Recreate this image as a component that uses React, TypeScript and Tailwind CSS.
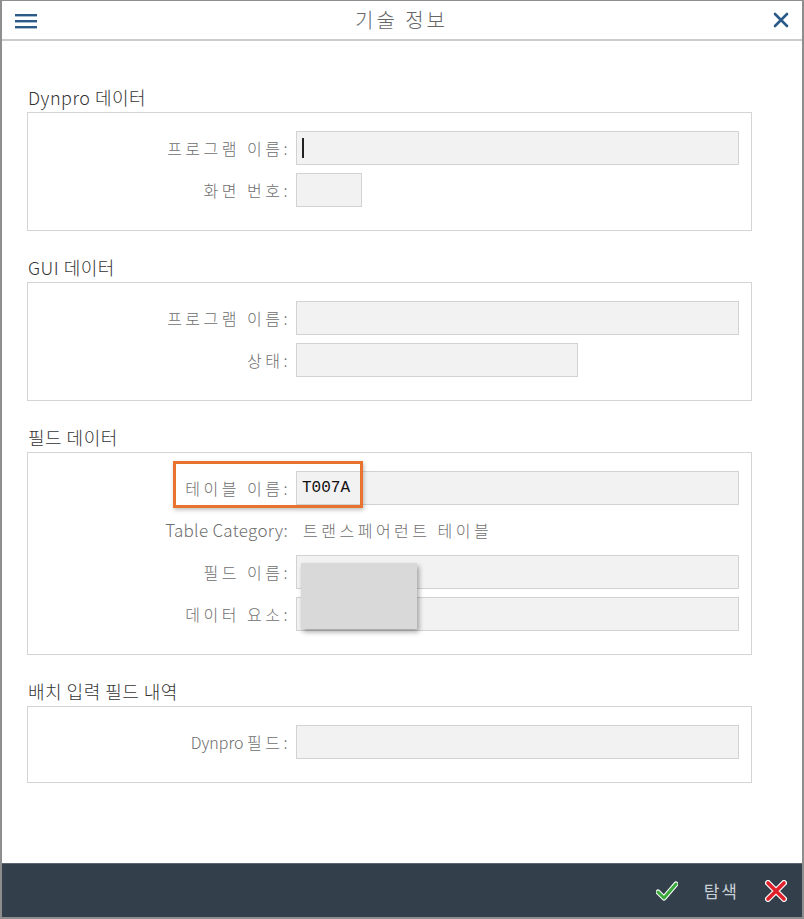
import { ReactNode } from 'react';

const font = { fontFamily: '"Noto Sans CJK KR", "Noto Sans", sans-serif' };

function Section({ title, children, extra }: { title: string; children: ReactNode; extra?: ReactNode }) {
  return (
    <section className="mt-[24px] first:mt-0">
      <h2 className="h-[27px] pb-[1px] text-[18px] leading-[24px] font-light text-[#333] pl-[1px] tracking-[0.5px]">{title}</h2>
      <div className="relative border border-[#d4d4d4] pt-[18px] pb-[23px] pr-[12px] flex flex-col gap-[8px]">
        {children}
        {extra}
      </div>
    </section>
  );
}

function Row({ label, latin, children }: { label: ReactNode; latin?: boolean; children: ReactNode }) {
  return (
    <div className="grid grid-cols-[260px_1fr] gap-[8px] items-center h-[34px]">
      <div
        className={
          latin
            ? 'text-right text-[17px] tracking-[0.3px] text-[#6e6e6e] whitespace-nowrap font-light'
            : 'text-right text-[16px] tracking-[3.5px] -mr-[3px] text-[#6e6e6e] whitespace-nowrap font-light'
        }
      >
        {label}
      </div>
      <div className="flex items-center h-full">{children}</div>
    </div>
  );
}

function Field({ w = 'w-full', value, cursor }: { w?: string; value?: string; cursor?: boolean }) {
  return (
    <div className={`${w} h-[34px] border border-[#d2d2d2] bg-[#f2f2f2] flex items-center px-[5px]`}>
      {cursor && <span className="w-[2px] h-[20px] bg-[#222]" />}
      {value && (
        <span className="text-[16px] text-[#111]" style={{ fontFamily: '"Liberation Mono", monospace' }}>
          {value}
        </span>
      )}
    </div>
  );
}

export default function App() {
  return (
    <div
      className="w-[804px] h-[919px] flex flex-col bg-white border-x-2 border-b-2 border-t border-[#8e8e8e]"
      style={font}
    >
      <header className="h-[40px] shrink-0 flex items-center justify-between px-[12px] border-b-2 border-[#cbcbcb]">
        <svg width="24" height="16" viewBox="0 0 24 16" className="mt-[2px]">
          <rect x="1" y="1" width="22" height="2.4" fill="#2c5a88" />
          <rect x="1" y="7" width="22" height="2.4" fill="#2c5a88" />
          <rect x="1" y="13" width="22" height="2.4" fill="#2c5a88" />
        </svg>
        <h1 className="text-[20px] text-[#666] tracking-[3px] font-light -ml-[8px]">기술 정보</h1>
        <svg width="16" height="16" viewBox="0 0 16 16" className="mr-[1px]">
          <path d="M2 2 L14 14 M14 2 L2 14" stroke="#2c5a88" strokeWidth="2.6" strokeLinecap="round" />
        </svg>
      </header>

      <main className="flex-1 pt-[44px] pl-[25px] pr-[50px]">
        <Section title="Dynpro 데이터">
          <Row label="프로그램 이름:">
            <Field cursor />
          </Row>
          <Row label="화면 번호:">
            <Field w="w-[66px]" />
          </Row>
        </Section>

        <Section title="GUI 데이터">
          <Row label="프로그램 이름:">
            <Field />
          </Row>
          <Row label="상태:">
            <Field w="w-[282px]" />
          </Row>
        </Section>

        <Section
          title="필드 데이터"
          extra={
            <>
              <div className="absolute left-[145px] top-[8px] w-[190px] h-[47px] border-[3px] border-[#e8732f] shadow-[1px_2px_4px_rgba(0,0,0,0.25)]" />
              <div className="absolute left-[273px] top-[110px] w-[116px] h-[66px] bg-[#d9d9d9] shadow-[2px_3px_5px_rgba(0,0,0,0.35)]" />
            </>
          }
        >
          <Row label="테이블 이름:">
            <Field value="T007A" />
          </Row>
          <Row label="Table Category:" latin>
            <span className="pl-[7px] text-[16px] tracking-[3.5px] font-light text-[#6e6e6e] whitespace-nowrap">트랜스페어런트 테이블</span>
          </Row>
          <Row label="필드 이름:">
            <Field />
          </Row>
          <Row label="데이터 요소:">
            <Field />
          </Row>
        </Section>

        <Section title="배치 입력 필드 내역">
          <Row
            label={
              <>
                <span className="tracking-[0px]">Dynpro </span>필드:
              </>
            }
          >
            <Field />
          </Row>
        </Section>
      </main>

      <footer className="h-[54px] shrink-0 bg-[#333f4b] border-t border-[#5b6672] flex items-center justify-end gap-[26px] pr-[15px]">
        <svg width="22" height="20" viewBox="0 0 22 20">
          <path d="M2 11 L8 17 L20 3" fill="none" stroke="#ffffff" strokeWidth="5" strokeLinecap="round" strokeLinejoin="round" />
          <path d="M2 11 L8 17 L20 3" fill="none" stroke="#3aa83a" strokeWidth="3" strokeLinecap="round" strokeLinejoin="round" />
        </svg>
        <span className="text-[17px] text-[#c9cfd6] tracking-[2px]">탐색</span>
        <svg width="22" height="22" viewBox="0 0 22 22">
          <path d="M3 3 L19 19 M19 3 L3 19" stroke="#ffffff" strokeWidth="6" strokeLinecap="round" />
          <path d="M3 3 L19 19 M19 3 L3 19" stroke="#e0202a" strokeWidth="3.6" strokeLinecap="round" />
        </svg>
      </footer>
    </div>
  );
}
